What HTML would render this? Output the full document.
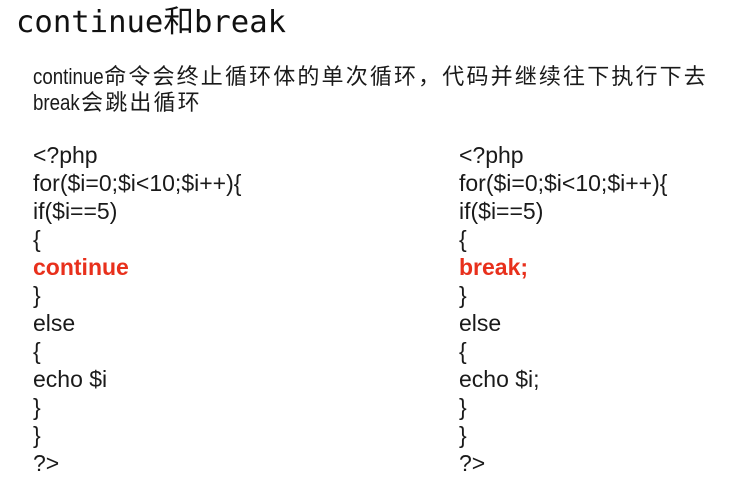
<!DOCTYPE html>
<html><head><meta charset="utf-8"><style>
html,body{margin:0;padding:0;background:#fff;width:747px;height:504px;overflow:hidden}
body{position:relative;color:#111;font-family:"Liberation Sans","Noto Sans CJK SC",sans-serif}
.title{position:absolute;left:16px;top:3px;font-family:"DejaVu Sans Mono","Noto Sans CJK SC",monospace;font-size:30.6px;line-height:40px;color:#111}
.desc{position:absolute;left:33px;top:64px;font-size:22px;line-height:26px;letter-spacing:2.15px;white-space:nowrap;color:#1a1a1a}
.l{display:inline-block;transform:scaleX(0.85);transform-origin:left;letter-spacing:0}
.code{position:absolute;top:141px;font-size:23px;line-height:28px;white-space:pre;color:#1a1a1a}
.r{color:#e8301c;font-weight:bold}
</style></head><body>
<div class="title">continue和break</div>
<div class="desc"><span class="l" style="margin-right:-12px">continue</span>命令会终止循环体的单次循环，代码并继续往下执行下去<br><span class="l" style="margin-right:-7px">break</span>会跳出循环</div>
<div class="code" style="left:33px">&lt;?php
for($i=0;$i&lt;10;$i++){
if($i==5)
{
<span class="r">continue</span>
}
else
{
echo $i
}
}
?&gt;</div>
<div class="code" style="left:459px">&lt;?php
for($i=0;$i&lt;10;$i++){
if($i==5)
{
<span class="r">break;</span>
}
else
{
echo $i;
}
}
?&gt;</div>
</body></html>
